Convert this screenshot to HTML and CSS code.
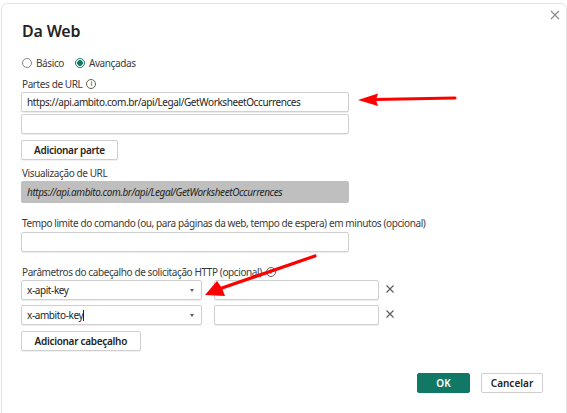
FILE: index.html
```html
<!DOCTYPE html>
<html lang="pt">
<head>
    <meta charset="UTF-8">
    <title>Da Web</title>
    <link rel="stylesheet" href="styles.css">
</head>
<body>
  <div class="dialog">
    <div class="head">
      <h1 class="title">Da Web</h1>
      <span class="close">
        <svg width="10" height="10" viewBox="0 0 10 10"><path d="M1 1L9 9M9 1L1 9" stroke="#8a8886" stroke-width="1.1"/></svg>
      </span>
    </div>

    <div class="radios">
      <label class="radio"><span class="dot"></span>Básico</label>
      <label class="radio on"><span class="dot"></span>Avançadas</label>
    </div>

    <div class="label first">Partes de URL<span class="info">i</span></div>
    <div class="input">https://api.ambito.com.br/api/Legal/GetWorksheetOccurrences</div>
    <div class="input gap2"></div>
    <button class="btn">Adicionar parte</button>

    <div class="label">Visualização de URL</div>
    <div class="preview">https://api.ambito.com.br/api/Legal/GetWorksheetOccurrences</div>

    <div class="label wide">Tempo limite do comando (ou, para páginas da web, tempo de espera) em minutos (opcional)</div>
    <div class="input gap2"></div>

    <div class="label wide tight">Parâmetros do cabeçalho de solicitação HTTP (opcional)<span class="info">i</span></div>
    <div class="hrow">
      <div class="combo">x-apit-key<span class="caret"></span></div>
      <div class="value"></div>
      <span class="remove"><svg width="8" height="8" viewBox="0 0 8 8"><path d="M0.5 0.5L7.5 7.5M7.5 0.5L0.5 7.5" stroke="#605e5c" stroke-width="1.2"/></svg></span>
    </div>
    <div class="hrow second">
      <div class="combo">x-ambito-key<span class="cursor"></span><span class="caret"></span></div>
      <div class="value"></div>
      <span class="remove"><svg width="8" height="8" viewBox="0 0 8 8"><path d="M0.5 0.5L7.5 7.5M7.5 0.5L0.5 7.5" stroke="#605e5c" stroke-width="1.2"/></svg></span>
    </div>
    <button class="btn wide-btn">Adicionar cabeçalho</button>

    <div class="footer">
      <button class="ok">OK</button>
      <button class="cancel">Cancelar</button>
    </div>
  </div>

  <!-- red arrows drawn on top of the screenshot -->
  <svg class="marks" width="567" height="413" viewBox="0 0 567 413">
    <path d="M455 98 L374 99.5" stroke="#f00" stroke-width="3.2" stroke-linecap="round" fill="none"/>
    <path d="M358 100 L378 93.5 L376 100 L378 106 Z" fill="#f00"/>
    <path d="M315 256 L222 288" stroke="#f00" stroke-width="3.2" stroke-linecap="round" fill="none"/>
    <path d="M205 295 L217 281 L222 288 L225 296 Z" fill="#f00"/>
  </svg>
</body>
</html>
```

FILE: styles.css
```css
html {
    font-family: "Noto Sans", "Open Sans", sans-serif;
    font-size: 10px;
    letter-spacing: -0.4px;
    color: #323130;
}
body {
    margin: 0;
    background: #fff;
}

.dialog {
    margin: 3px 0 0 1px;
    width: 526px;
    height: 420px;
    padding: 0 19px;
    border: 1px solid #e3e3e3;
    border-radius: 6px;
}

.head {
    display: flex;
    justify-content: space-between;
    align-items: flex-start;
}
.title {
    margin: 15px 0 0 1px;
    font-size: 16px;
    font-weight: 600;
    line-height: 24px;
    letter-spacing: -0.2px;
    color: #252423;
}
.close {
    display: flex;
    margin: 6px -13px 0 0;
}

.radios {
    display: flex;
    gap: 10px;
    margin-top: 13px;
    height: 14px;
    align-items: center;
}
.radio {
    display: flex;
    align-items: center;
    gap: 4px;
    color: #3b3a39;
}
.dot {
    width: 10px;
    height: 10px;
    border: 1px solid #8a8886;
    border-radius: 50%;
    margin-left: 1px;
    box-sizing: border-box;
}
.radio.on .dot {
    border-color: #117865;
    background: radial-gradient(circle, #117865 0 2.6px, #fff 3.1px);
}

.label {
    display: flex;
    align-items: center;
    gap: 4px;
    height: 14px;
    margin: 6px 0 1px 1px;
    line-height: 14px;
    color: #3b3a39;
    white-space: pre;
}
.label.first { margin-top: 7px; }
.label.wide { margin-top: 13px; margin-bottom: 2px; }
.label.tight { margin-bottom: 1px; }

.info {
    display: block;
    box-sizing: border-box;
    width: 10px;
    height: 10px;
    border: 1px solid #605e5c;
    border-radius: 50%;
    font-size: 7px;
    line-height: 8px;
    letter-spacing: 0;
    text-align: center;
}

.input, .combo, .value {
    box-sizing: border-box;
    height: 20px;
    border: 1px solid #d0d0d0;
    border-radius: 2px;
    box-shadow: 0 1px 1px rgba(0,0,0,0.08);
    padding: 0 5px;
    line-height: 18px;
    color: #252423;
    background: #fff;
}
.input { width: 328px; }
.gap2 { margin-top: 2px; }

.btn {
    display: block;
    margin-top: 6px;
    height: 20px;
    padding: 0 12px;
    border: 1px solid #cfcfcf;
    border-radius: 2px;
    background: #fff;
    font: 600 10px "Noto Sans", "Open Sans", sans-serif;
    letter-spacing: -0.3px;
    color: #252423;
    box-shadow: 0 1px 1px rgba(0,0,0,0.06);
}
.wide-btn { padding: 0 12.5px; }

.preview {
    box-sizing: border-box;
    width: 328px;
    height: 22px;
    padding: 0 6px;
    line-height: 22px;
    background: #bfbfbf;
    border-radius: 2px;
    font-style: italic;
    color: #252423;
}

.hrow {
    display: flex;
    align-items: center;
}
.hrow.second { margin-top: 5px; }
.combo {
    position: relative;
    width: 181px;
}
.caret {
    position: absolute;
    right: 7px;
    top: 8px;
    border: 2.5px solid transparent;
    border-top: 3px solid #605e5c;
    border-bottom: 0;
}
.cursor {
    display: inline-block;
    width: 1px;
    height: 11px;
    background: #252423;
    vertical-align: -2px;
}
.value {
    width: 165px;
    margin-left: 12px;
}
.remove {
    display: flex;
    margin: -2px 0 0 7px;
}

.footer {
    display: flex;
    justify-content: flex-end;
    gap: 11px;
    margin: 22px 4px 0 0;
}
.ok, .cancel {
    height: 20px;
    border-radius: 2px;
    font: 600 10px "Noto Sans", "Open Sans", sans-serif;
}
.ok {
    width: 53px;
    border: 1px solid #117865;
    background: #117865;
    color: #fff;
}
.cancel {
    width: 62px;
    border: 1px solid #cfcfcf;
    background: #fff;
    color: #252423;
}

.marks {
    position: absolute;
    left: 0;
    top: 0;
    pointer-events: none;
}
```
